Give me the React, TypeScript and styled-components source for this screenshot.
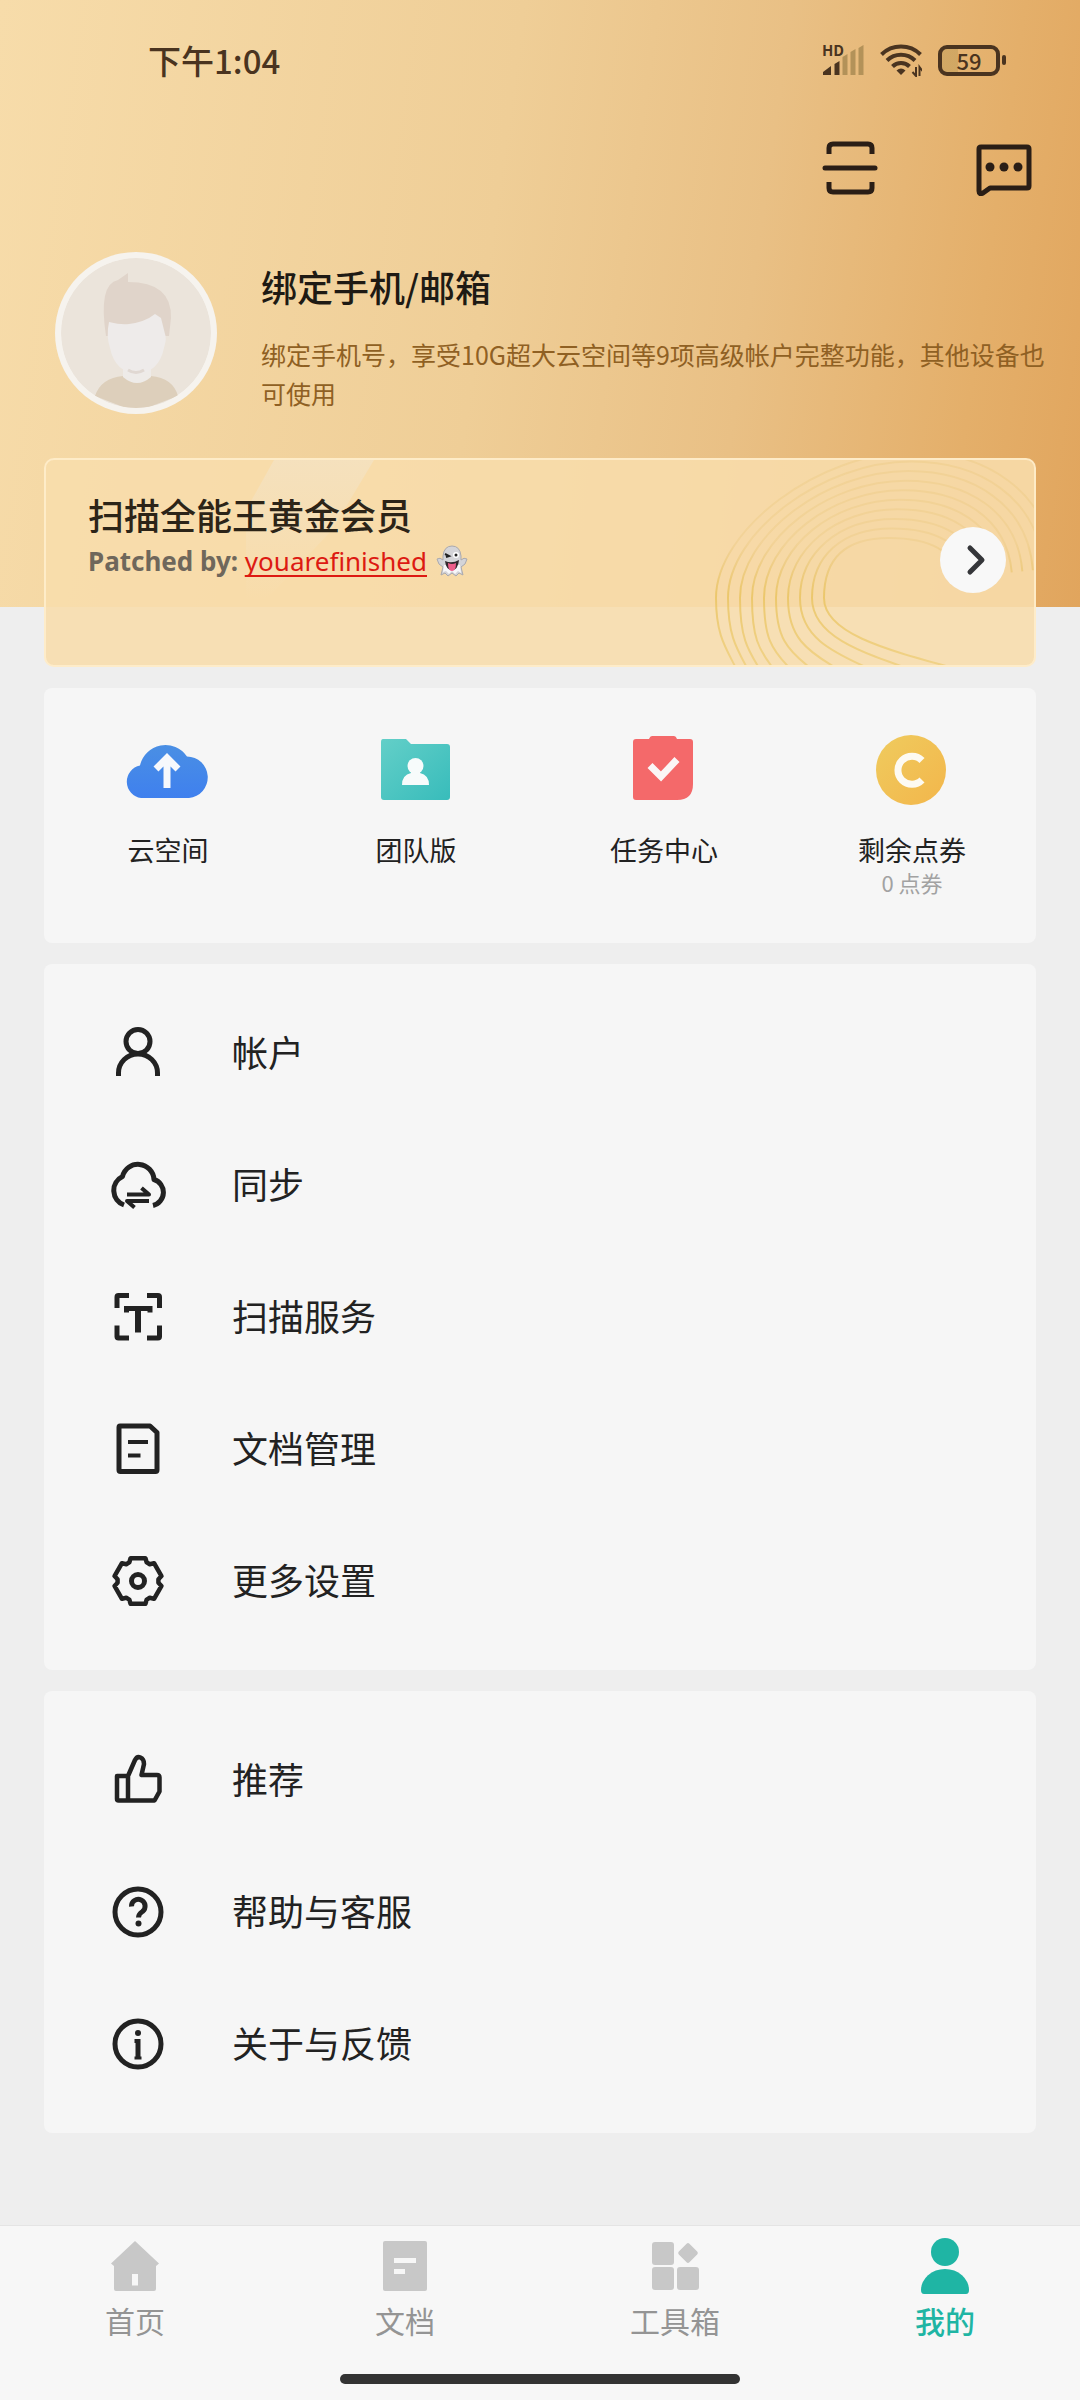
import React from "react";
import styled, { createGlobalStyle, css } from "styled-components";

const INK = "#222222";
const TEAL = "#1fb5a4";

const GlobalStyle = createGlobalStyle`
  *, *::before, *::after { box-sizing: border-box; }
  body {
    margin: 0;
    background: #eeeeee;
    color: ${INK};
    font-family: "Noto Sans CJK SC", "Noto Sans", sans-serif;
  }
  button { font: inherit; color: inherit; background: none; border: 0; padding: 0; cursor: pointer; }
  svg { display: block; flex: none; }
`;

const Page = styled.div`
  min-height: 100vh;
  display: flex;
  flex-direction: column;
`;

const Hero = styled.header`
  display: flex;
  flex-direction: column;
  padding-bottom: 193px;
  background: linear-gradient(98deg, #f7dcaa 0%, #efce97 45%, #e9c085 68%, #e4af6a 88%, #e1a55d 100%);
`;

const StatusBar = styled.div`
  display: flex;
  justify-content: space-between;
  align-items: center;
  padding: 34px 74px 0 148px;
  height: 86px;
  color: #4a3420;
`;

const Clock = styled.time`
  font-size: 33px;
  line-height: 50px;
  font-weight: 500;
`;

const StatusIcons = styled.div`
  display: flex;
  align-items: center;
  gap: 16px;
`;

const Signal = styled.div`
  position: relative;
  width: 42px;
  height: 32px;
`;

const SignalTag = styled.span`
  position: absolute;
  left: 0;
  top: 0;
  font-size: 15px;
  line-height: 12px;
  font-weight: 700;
`;

const Battery = styled.div`
  display: flex;
  align-items: center;
  gap: 2px;
  &::after {
    content: "";
    width: 4px;
    height: 10px;
    border-radius: 2px;
    background: #4a3420;
  }
`;

const BatteryBody = styled.span`
  width: 62px;
  height: 31px;
  border: 4px solid #4a3420;
  border-radius: 9px;
  display: grid;
  place-items: center;
  font-size: 22px;
  line-height: 22px;
  font-weight: 500;
  background: linear-gradient(90deg, rgba(150, 130, 60, 0.25) 30%, transparent 30%);
`;

const Toolbar = styled.div`
  display: flex;
  justify-content: flex-end;
  gap: 98px;
  padding: 54px 48px 0 48px;
`;

const IconButton = styled.button`
  width: 56px;
  height: 56px;
`;

const Profile = styled.section`
  display: flex;
  align-items: flex-start;
  gap: 44px;
  padding: 56px 32px 0 55px;
`;

const Avatar = styled.div`
  flex: none;
  width: 162px;
  height: 162px;
`;

const ProfileText = styled.div`
  flex: 1;
  padding-top: 8px;
`;

const ProfileTitle = styled.h1`
  margin: 0;
  font-size: 36px;
  line-height: 52px;
  font-weight: 500;
  color: #1e1a14;
`;

const ProfileNote = styled.p`
  margin: 23px 0 0;
  font-size: 25px;
  line-height: 39px;
  color: #8f6023;
`;

const Content = styled.main`
  flex: 1;
  display: flex;
  flex-direction: column;
  gap: 21px;
  padding: 0 44px 92px;
`;

const Banner = styled.section`
  position: relative;
  margin-top: -149px;
  display: flex;
  justify-content: space-between;
  align-items: flex-start;
  height: 209px;
  padding: 28px 28px 0 42px;
  border: 2px solid rgba(255, 238, 205, 0.85);
  border-radius: 10px;
  background: rgba(248, 221, 172, 0.88);
  overflow: hidden;
`;

const BannerArt = styled.svg`
  position: absolute;
  right: 0;
  top: 0;
`;

const BannerShine = styled.svg`
  position: absolute;
  left: 200px;
  top: 0;
`;

const BannerText = styled.div`
  position: relative;
`;

const BannerTitle = styled.h2`
  margin: 0;
  font-size: 36px;
  line-height: 52px;
  font-weight: 500;
  color: #2c2418;
`;

const Patched = styled.p`
  margin: 2px 0 0;
  display: flex;
  align-items: center;
  gap: 9px;
  font-family: "Noto Sans", "Noto Sans CJK SC", sans-serif;
  font-size: 26px;
  line-height: 38px;
  font-weight: 700;
  color: #6f675b;
  a {
    color: #dd1a12;
    font-weight: 400;
    text-decoration: underline;
    text-decoration-thickness: 2px;
    text-underline-offset: 4px;
    text-decoration-skip-ink: none;
  }
`;

const RoundButton = styled.button`
  position: relative;
  margin-top: 39px;
  width: 66px;
  height: 66px;
  border-radius: 50%;
  background: #f8f8f8;
  display: grid;
  place-items: center;
`;

const Card = styled.section`
  background: #f6f6f6;
  border-radius: 8px;
`;

const Shortcuts = styled(Card)`
  display: grid;
  grid-template-columns: repeat(4, 1fr);
  padding: 48px 0 39px;
`;

const Shortcut = styled.button`
  display: flex;
  flex-direction: column;
  align-items: center;
  min-height: 168px;
`;

const ShortcutLabel = styled.span`
  margin-top: 28px;
  font-size: 27px;
  line-height: 36px;
`;

const ShortcutHint = styled.span`
  font-size: 22px;
  line-height: 28px;
  color: #a2a2a2;
`;

const Menu = styled(Card)`
  padding: 23px 0;
`;

const MenuRow = styled.button`
  width: 100%;
  height: 132px;
  display: flex;
  align-items: center;
  gap: 66px;
  padding: 0 66px;
  font-size: 36px;
  line-height: 52px;
  text-align: left;
`;

const MenuLabel = styled.span`
  padding-bottom: 4px;
`;

const Tabs = styled.nav`
  display: grid;
  grid-template-columns: repeat(4, 1fr);
  padding-top: 10px;
  background: #f7f7f7;
  border-top: 1px solid #e4e4e4;
`;

const Tab = styled.button<{ $active?: boolean }>`
  display: flex;
  flex-direction: column;
  align-items: center;
  gap: 2px;
  font-size: 30px;
  line-height: 44px;
  color: #949494;
  ${(p) =>
    p.$active &&
    css`
      color: ${TEAL};
      font-weight: 500;
    `}
`;

const HomeArea = styled.div`
  display: flex;
  justify-content: center;
  padding: 32px 0 17px;
  background: #f7f7f7;
`;

const HomeBar = styled.div`
  width: 37%;
  height: 10px;
  border-radius: 5px;
  background: #333333;
`;

/* Contour lines on the right side of the banner, from the innermost loop outwards. */
const contours = Array.from({ length: 10 }, (_, i) => {
  const t = i / 9;
  const s = 1 - t;
  const rx = 245 + t * 95;
  const ry = 118 - t * 10;
  const tx = 175 + t * 25;
  const ty = 78 - t * 86;
  const lx = 110 - t * 108;
  const ly = 138;
  const bx = 24 + 100 * s + 130 * s * s * s;
  const by = 212;
  return `M${rx} ${ry} C${rx - 5} ${ry - 28 - t * 50} ${tx + 40 + t * 30} ${ty} ${tx} ${ty} C${tx - 45 - t * 50} ${ty} ${lx} ${ly - 38 - t * 30} ${lx} ${ly} C${lx} ${ly + 38} ${bx - 12 - 60 * s * s} ${by - 24 + 4 * s} ${bx} ${by}`;
});

const LineIcon = ({ children }: { children: React.ReactNode }) => (
  <svg width="56" height="56" viewBox="0 0 56 56" fill="none" stroke={INK} strokeWidth="5" strokeLinejoin="round">
    {children}
  </svg>
);

const UserIcon = () => (
  <LineIcon>
    <circle cx="28" cy="16.500" r="12" />
    <path d="M8.500 51v-3a19.500 19 0 0 1 39 0V51" />
  </LineIcon>
);

const SyncIcon = () => (
  <LineIcon>
    <path d="M14 48A15.500 15.500 0 0 1 12.500 19.500A16 16 0 0 1 44 22.500A13.500 13.500 0 0 1 43 48.500" />
    <path d="M17 37.500h22l-7.500-6.500M39 44H17l7.500 6.500" strokeWidth="4" />
  </LineIcon>
);

const ScanTextIcon = () => (
  <LineIcon>
    <path d="M7 19V8q0-1.500 1.500-1.500H19M37 6.500h11q1.500 0 1.500 1.500v11M49.500 36.500v11q0 1.500-1.500 1.500H37M19 49H8.500Q7 49 7 47.500v-11" />
    <path d="M16.500 23.500v-4h23.500v4" strokeWidth="5" strokeLinejoin="miter" />
    <path d="M28 19.500V43.500" strokeWidth="6" />
  </LineIcon>
);

const DocumentIcon = () => (
  <LineIcon>
    <path d="M10 5h30l7 6.500V49q0 1.500-1.500 1.500h-35Q9 50.500 9 49V6.500Q9 5 10 5Z" />
    <path d="M18 21h20M18 34.500h12.500" strokeWidth="4" />
  </LineIcon>
);

/* Six flat teeth joined by shallow notches. */
const gearPoints = Array.from({ length: 6 }, (_, i) => {
  const point = (deg: number, r: number) => {
    const a = ((i * 60 + deg - 90) * Math.PI) / 180;
    return `${(28 + r * Math.cos(a)).toFixed(2)} ${(28 + r * Math.sin(a)).toFixed(2)}`;
  };
  return [point(-18, 24), point(18, 24), point(25, 20.5), point(35, 20.5)].join(" L");
});

const GearIcon = () => (
  <LineIcon>
    <path d={`M${gearPoints.join(" L")} Z`} strokeWidth="4.500" />
    <circle cx="28" cy="28" r="6.500" />
  </LineIcon>
);

const ThumbIcon = () => (
  <LineIcon>
    <path d="M7 24h11v24.500H8.500Q7 48.500 7 47V24ZM18 24l7-16q2-4 5.500-2.500Q34 7 34 12l-2.500 11H47q2.500 0 2.500 2.500v14l-5 9H18" strokeWidth="4.500" />
  </LineIcon>
);

const HelpIcon = () => (
  <LineIcon>
    <circle cx="28" cy="28" r="23" />
    <path d="M21.500 22.500a6.800 6.800 0 1 1 11 5Q28.500 30 28.500 33.500" />
    <circle cx="28.500" cy="39.500" r="3" fill={INK} stroke="none" />
  </LineIcon>
);

const InfoIcon = () => (
  <LineIcon>
    <circle cx="28" cy="28" r="23" />
    <path d="M24.500 25h4" strokeWidth="4" />
    <path d="M28 23V43" />
    <path d="M24.500 42h7" strokeWidth="3" />
    <circle cx="28" cy="17" r="3" fill={INK} stroke="none" />
  </LineIcon>
);

const CloudUpIcon = () => (
  <svg width="84" height="68" viewBox="2 2 84 68">
    <defs>
      <linearGradient id="cloud" x1="0" y1="0" x2="0" y2="1">
        <stop offset="0" stopColor="#4a8fe4" />
        <stop offset="1" stopColor="#3f80ee" />
      </linearGradient>
    </defs>
    <path fill="url(#cloud)" d="M17 64A16.500 16.500 0 0 1 16 31.500A26 26 0 0 1 63 22.500A20.800 20.800 0 0 1 65 64Z" />
    <path fill="none" stroke="#f6f8fc" strokeWidth="7" d="M43 54V25M32 35l11-11 11 11" />
  </svg>
);

const FolderIcon = () => (
  <svg width="70" height="68" viewBox="1 1 70 68">
    <defs>
      <linearGradient id="folder" x1="0" y1="0" x2="1" y2="1">
        <stop offset="0" stopColor="#63cfc8" />
        <stop offset="1" stopColor="#38bcbb" />
      </linearGradient>
    </defs>
    <path fill="url(#folder)" d="M3 4h23l5 5h36q3 0 3 3v50q0 3-3 3H4q-3 0-3-3V7q0-3 2-3Z" />
    <circle cx="35.500" cy="31" r="8" fill="#f7fbfb" />
    <path fill="#f7fbfb" d="M22 50q0-10 9-12l0-4h9v4q9 2 9 12Z" />
  </svg>
);

const TaskIcon = () => (
  <svg width="62" height="68" viewBox="1 1 62 68">
    <path fill="#f4696a" d="M4 4H17q1-3 3-3h22q2 0 3 3h13q3 0 3 3v42q0 16-16 16H4q-3 0-3-3V7q0-3 3-3Z" />
    <path fill="none" stroke="#fbf6f6" strokeWidth="7" d="M18 30.500l11 11 16-17" />
  </svg>
);

const CoinIcon = () => (
  <svg width="72" height="68" viewBox="1 0 72 68" overflow="visible">
    <defs>
      <linearGradient id="coin" x1="0" y1="0" x2="1" y2="1">
        <stop offset="0" stopColor="#efcb5e" />
        <stop offset="1" stopColor="#f3b64b" />
      </linearGradient>
    </defs>
    <circle cx="36" cy="34" r="35" fill="url(#coin)" />
    <path fill="none" stroke="#fdfaf2" strokeWidth="7" d="M47 24.500A14 14 0 1 0 47 44" />
  </svg>
);

const HomeIcon = () => (
  <svg width="56" height="60" viewBox="0 0 56 60">
    <path fill="#c8c8c8" fillRule="evenodd" d="M28 5L52 27.500 49 30V53q0 2-2 2H9q-2 0-2-2V30L4 27.500ZM25 38V49.500h6V38Z" />
  </svg>
);

const DocsIcon = () => (
  <svg width="56" height="60" viewBox="0 0 56 60">
    <rect x="6" y="5" width="44" height="50" rx="2" fill="#c8c8c8" />
    <path stroke="#f7f7f7" strokeWidth="5" d="M17 24.500h22M17 35.500h11" />
  </svg>
);

const ToolsIcon = () => (
  <svg width="56" height="60" viewBox="0 0 56 60" fill="#c8c8c8">
    <rect x="5" y="6" width="22" height="23" rx="3" />
    <rect x="5" y="31" width="22" height="23" rx="3" />
    <rect x="30" y="31" width="22" height="23" rx="3" />
    <rect x="33.500" y="9.500" width="15" height="15" rx="2" transform="rotate(45 41 17)" />
  </svg>
);

const MeIcon = () => (
  <svg width="56" height="60" viewBox="0 0 56 60" fill={TEAL}>
    <circle cx="28" cy="16" r="14" />
    <path d="M4 54a24 21 0 0 1 48 0q0 4-3 4H7q-3 0-3-4Z" />
  </svg>
);

const AvatarPicture = () => (
  <svg width="162" height="162" viewBox="0 0 162 162" role="img" aria-label="头像">
    <defs>
      <clipPath id="face">
        <circle cx="81" cy="81" r="75" />
      </clipPath>
    </defs>
    <circle cx="81" cy="81" r="81" fill="#f6f3ee" />
    <g clipPath="url(#face)">
      <circle cx="81" cy="81" r="75" fill="#ebe4db" />
      <path fill="#ddcfbb" d="M40 144q6-18 28-20l13 6 15-6q22 2 27 20l-42 16Z" />
      <path fill="#eeebe8" d="M68 112h28v13q-14 12-28 0Z" />
      <path fill="#e0d4ca" d="M51 84q-8-52 12-56l10-7 0 9q44 0 43 36l-2 18H52Z" />
      <path fill="#eeebea" d="M54 70q12 3 20 2 16-2 26-10l6 4 4 16q2 4-1 14-5 24-27 26-22-2-27-26-4-12-1-26Z" />
      <path fill="none" stroke="#e0d8d2" strokeWidth="3" d="M73 118q8 5 16 0" />
    </g>
  </svg>
);

const Ghost = () => (
  <svg width="32" height="32" viewBox="0 0 32 32" role="img" aria-label="👻">
    <path fill="#d4d4d8" stroke="#aaa9ae" strokeWidth="1" d="M1 14q3-2 6 1V11q1-10 9-10t9 10v4q3-3 6-1-1 6-6 8l2 8-4-2-3 3-4-3-4 3-3-3-4 2 2-8q-5-2-6-8Z" />
    <path fill="#f7f7fa" d="M8 20h16l1 8-3-2-3 3-3-3-3 3-3-3-3 1Z" />
    <path fill="#33282d" d="M9 16q7 3 14-1-1 10-7 10T9 16Z" />
    <path fill="#ee5d8a" d="M12 18q4 2 8 0 0 8-4 8t-4-8Z" />
    <circle cx="20" cy="10" r="3" fill="#fff" />
    <circle cx="20" cy="10" r="1.500" fill="#222" />
    <path stroke="#222" strokeWidth="2" fill="none" d="M9 9l4 2-3 1" />
  </svg>
);

const shortcuts = [
  { label: "云空间", icon: <CloudUpIcon /> },
  { label: "团队版", icon: <FolderIcon /> },
  { label: "任务中心", icon: <TaskIcon /> },
  { label: "剩余点券", icon: <CoinIcon />, hint: "0 点券" },
];

const accountMenu = [
  { label: "帐户", icon: <UserIcon /> },
  { label: "同步", icon: <SyncIcon /> },
  { label: "扫描服务", icon: <ScanTextIcon /> },
  { label: "文档管理", icon: <DocumentIcon /> },
  { label: "更多设置", icon: <GearIcon /> },
];

const supportMenu = [
  { label: "推荐", icon: <ThumbIcon /> },
  { label: "帮助与客服", icon: <HelpIcon /> },
  { label: "关于与反馈", icon: <InfoIcon /> },
];

const tabs = [
  { label: "首页", icon: <HomeIcon /> },
  { label: "文档", icon: <DocsIcon /> },
  { label: "工具箱", icon: <ToolsIcon /> },
  { label: "我的", icon: <MeIcon />, active: true },
];

const MenuCard = ({ items }: { items: { label: string; icon: React.ReactNode }[] }) => (
  <Menu>
    {items.map((item) => (
      <MenuRow key={item.label} type="button">
        {item.icon}
        <MenuLabel>{item.label}</MenuLabel>
      </MenuRow>
    ))}
  </Menu>
);

export default function App() {
  return (
    <Page>
      <GlobalStyle />
      <Hero>
        <StatusBar>
          <Clock>下午1:04</Clock>
          <StatusIcons>
            <Signal>
              <SignalTag>HD</SignalTag>
              <svg width="42" height="32" viewBox="0 0 42 32">
                <path fill="#4a3420" d="M1 31v-3l8-6v9ZM12.500 31V20l5-3v14Z" />
                <path fill="#b39259" d="M20.500 31V13l5-3v21ZM28.500 31V8l5-3v26ZM36.500 31V4l5-3v30Z" />
              </svg>
            </Signal>
            <svg width="42" height="34" viewBox="0 0 42 34" fill="none" stroke="#4a3420" strokeWidth="4">
              <path d="M1.500 11.500a28 28 0 0 1 39 0M7 17.500a20 20 0 0 1 28 0M12.500 23.500a12 12 0 0 1 17 0" />
              <path fill="#4a3420" stroke="none" d="M16.500 27.500q4.500-4 9 0L21 32Z" />
              <path strokeWidth="2" d="M36 24v9l-3.500-4M39.500 33v-9l3 4" />
            </svg>
            <Battery>
              <BatteryBody>59</BatteryBody>
            </Battery>
          </StatusIcons>
        </StatusBar>
        <Toolbar>
          <IconButton type="button" aria-label="扫一扫">
            <svg width="56" height="56" viewBox="0 0 56 56" fill="none" stroke="#2a1e16" strokeWidth="5">
              <path d="M7 14V8q0-4 4-4h35q4 0 4 4v6M7 42v6q0 4 4 4h35q4 0 4-4v-6" />
              <path d="M3 28h50" strokeLinecap="round" />
            </svg>
          </IconButton>
          <IconButton type="button" aria-label="消息">
            <svg width="56" height="56" viewBox="0 0 56 56" fill="none" stroke="#2a1e16" strokeWidth="5" strokeLinejoin="round">
              <path d="M5 7h46q2 0 2 2v37q0 2-2 2H14l-7 5q-4 2-4-2V9q0-2 2-2Z" />
              <g fill="#2a1e16" stroke="none">
                <circle cx="14" cy="27" r="4.500" />
                <circle cx="28" cy="27" r="4.500" />
                <circle cx="42" cy="27" r="4.500" />
              </g>
            </svg>
          </IconButton>
        </Toolbar>
        <Profile>
          <Avatar>
            <AvatarPicture />
          </Avatar>
          <ProfileText>
            <ProfileTitle>绑定手机/邮箱</ProfileTitle>
            <ProfileNote>绑定手机号，享受10G超大云空间等9项高级帐户完整功能，其他设备也可使用</ProfileNote>
          </ProfileText>
        </Profile>
      </Hero>
      <Content>
        <Banner>
          <BannerShine width="130" height="140" viewBox="0 0 130 140">
            <defs>
              <linearGradient id="shine" x1="0" y1="0" x2="0" y2="1">
                <stop offset="0" stopColor="#f4e2c2" stopOpacity="0.8" />
                <stop offset="1" stopColor="#f4e2c2" stopOpacity="0" />
              </linearGradient>
            </defs>
            <path fill="url(#shine)" d="M28 0H128L86 70 20 140H0V50Z" />
          </BannerShine>
          <BannerArt width="320" height="206" viewBox="0 0 320 206" fill="none">
            <defs>
              <linearGradient id="contour" gradientUnits="userSpaceOnUse" x1="0" y1="0" x2="0" y2="206">
                <stop offset="0" stopColor="#e5c06c" stopOpacity="0.25" />
                <stop offset="0.4" stopColor="#e5c06c" stopOpacity="0.25" />
                <stop offset="0.65" stopColor="#e9c35e" stopOpacity="0.8" />
                <stop offset="1" stopColor="#ecc968" stopOpacity="0.6" />
              </linearGradient>
            </defs>
            {contours.map((d) => (
              <path key={d} d={d} stroke="url(#contour)" strokeWidth="2" />
            ))}
          </BannerArt>
          <BannerText>
            <BannerTitle>扫描全能王黄金会员</BannerTitle>
            <Patched>
              <span>
                Patched by: <a href="#youarefinished">youarefinished</a>
              </span>
              <Ghost />
            </Patched>
          </BannerText>
          <RoundButton type="button" aria-label="查看会员">
            <svg width="32" height="32" viewBox="0 0 32 32" fill="none" stroke="#35363a" strokeWidth="5" strokeLinecap="round" strokeLinejoin="round">
              <path d="M13 4l12 12-12 12" />
            </svg>
          </RoundButton>
        </Banner>
        <Shortcuts>
          {shortcuts.map((item) => (
            <Shortcut key={item.label} type="button">
              {item.icon}
              <ShortcutLabel>{item.label}</ShortcutLabel>
              {item.hint && <ShortcutHint>{item.hint}</ShortcutHint>}
            </Shortcut>
          ))}
        </Shortcuts>
        <MenuCard items={accountMenu} />
        <MenuCard items={supportMenu} />
      </Content>
      <Tabs>
        {tabs.map((tab) => (
          <Tab key={tab.label} type="button" $active={tab.active} aria-current={tab.active ? "page" : undefined}>
            {tab.icon}
            <span>{tab.label}</span>
          </Tab>
        ))}
      </Tabs>
      <HomeArea>
        <HomeBar />
      </HomeArea>
    </Page>
  );
}
